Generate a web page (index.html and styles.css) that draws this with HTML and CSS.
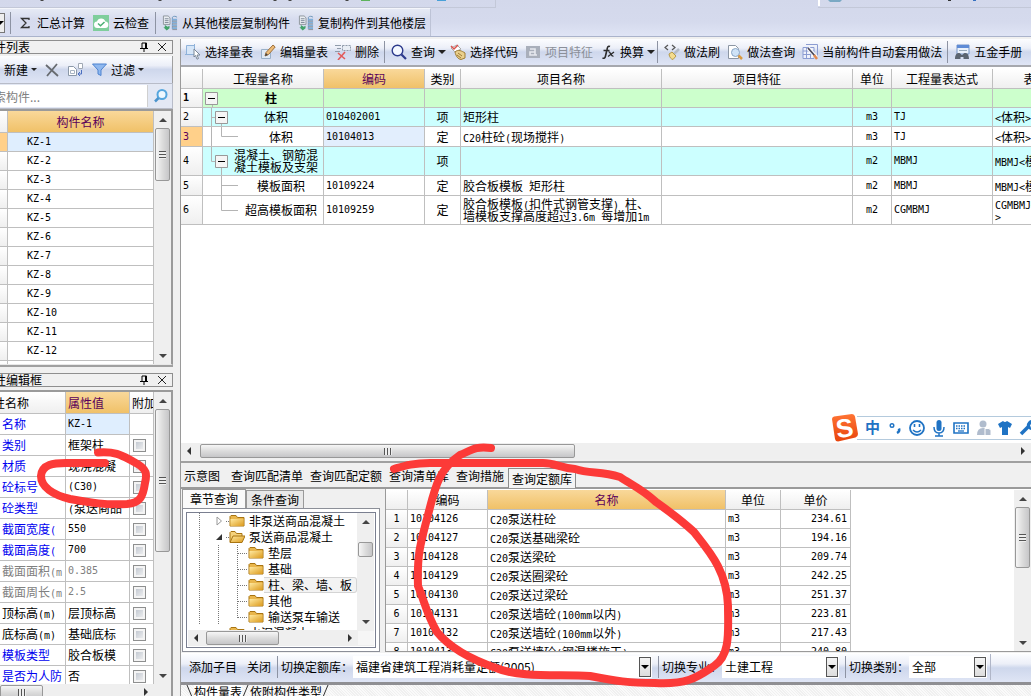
FILE: index.html
```html
<!DOCTYPE html>
<html lang="zh-CN">
<head>
<meta charset="utf-8">
<title>构件做法</title>
<link rel="stylesheet" href="styles.css">
</head>
<body>
<svg class="defs" aria-hidden="true">
  <linearGradient id="gold" x1="0" y1="0" x2="1" y2="1"><stop offset="0" stop-color="#ffe9a0"/><stop offset="1" stop-color="#dc9a1c"/></linearGradient>
  <linearGradient id="orange" x1="0" y1="0" x2="0" y2="1"><stop offset="0" stop-color="#ff7434"/><stop offset="1" stop-color="#e8440c"/></linearGradient>
  <symbol id="folder" viewBox="0 0 16 14"><path d="M1 2.500V12h14V3.500H8.500L7 1.500H2z" fill="#e9b64c" stroke="#a87412"/><path d="M1.500 5h13v7h-13z" fill="url(#gold)"/></symbol>
  <symbol id="folder-open" viewBox="0 0 16 14"><path d="M1 12V2.500L2 1.500h4l1.500 2H13V6" fill="#f5d27c" stroke="#a87412"/><path d="M1 12.500L4 6h12l-3 6.500z" fill="url(#gold)" stroke="#a87412"/></symbol>
  <symbol id="pin" viewBox="0 0 10 10"><path d="M3 1h4.500v5M3 1v5M1 6.500h8M5 6.500V10" fill="none" stroke="#000"/><path d="M6 1h1.500v5H6z"/></symbol>
  <symbol id="cross" viewBox="0 0 10 10"><path d="M1 1l8 8M9 1L1 9" stroke="#222" fill="none"/></symbol>
  <symbol id="copy-down" viewBox="0 0 17 16"><path d="M1.500.5h5l2 2v7h-7z" fill="#e9edf2" stroke="#8d949c"/><path d="M3 3.500h4M3 5.500h4M3 7.500h4" stroke="#7d8896"/><path d="M3 10v2.500H1.500L5 16l3-2.500V11l-2 1z" fill="#43a36a"/><path d="M11 2c1-1.500 4-1.500 5 0M11 2v12.500" fill="none" stroke="#6a93b8"/><path d="M11 4.500h5M11 7.500h5M11 10.500h5M11 13.500h5" stroke="#7fb0dc" stroke-width="2"/><path d="M11 6h5M11 9h5M11 12h5M11 15h5" stroke="#8a8f98" stroke-width="1"/></symbol>
</svg>

<div class="app">
  <header class="top">
    <div class="strip">
      <div class="strip-a">
        <svg width="495" height="7" aria-hidden="true"><path d="M42 0v1M160 0v1M230 0v1M275 0v1M290 0v1M347 0v1" stroke="#444" stroke-width="3"/><path d="M361 0h9v1h-9z" fill="#5db35c"/><path d="M437 0h9v1h-9z" fill="#48a0d8"/></svg>
      </div>
      <div class="strip-b"><svg width="213" height="7" aria-hidden="true"><path d="M1 0v6" stroke="#fff" stroke-width="2"/><path d="M10 0h14l-2 2H12z" fill="#7aa9c4"/><path d="M130 0h3v1h-3z" fill="#333"/><path d="M155 0h3v1h-3z" fill="#3570c0"/></svg></div>
    </div>
    <div class="bar bar-top">
      <span class="combo-end"></span>
      <i class="sep"></i>
      <button class="tool"><svg width="16" height="16" viewBox="0 0 16 16"><path d="M12 5V3.500H4.500L9 8l-4.500 4.500H12V11" fill="none" stroke="#333" stroke-width="1.300"/></svg>汇总计算</button>
      <button class="tool"><svg width="16" height="16" viewBox="0 0 16 16"><path d="M0 0h16v16H0z" fill="#7fce9c"/><path d="M4.500 13a3.200 3.200 0 0 1-.5-6.400 4.300 4.300 0 0 1 8.300 0A3.200 3.200 0 0 1 12 13z" fill="#fff"/><path d="M5 8.500l2.500 2.200L11.500 7" fill="none" stroke="#4caf75" stroke-width="1.500"/></svg>云检查</button>
      <i class="sep"></i>
      <button class="tool"><svg width="16" height="16"><use href="#copy-down"/></svg>从其他楼层复制构件</button>
      <button class="tool"><svg width="16" height="16"><use href="#copy-down"/></svg>复制构件到其他楼层</button>
    </div>
  </header>

  <div class="work">
    <aside class="side">
      <section class="panel panel-list">
        <h2 class="cap"><span>构件列表</span><svg width="10" height="10"><use href="#pin"/></svg><svg width="10" height="10"><use href="#cross"/></svg></h2>
        <div class="bar bar-side">
          <button class="tool drop">新建<i class="tri"></i></button>
          <button class="tool" aria-label="删除构件"><svg width="14" height="14" viewBox="0 0 14 14"><path d="M1 2l12 11M12 1L2 13" stroke="#676b70" stroke-width="1.800" fill="none"/></svg></button>
          <button class="tool" aria-label="复制构件"><svg width="17" height="14" viewBox="0 0 17 14"><path d="M1.500 3.500h5l3 3v6h-8z" fill="#fff" stroke="#8b98a8"/><path d="M3.500 7.500h4v3h-4z" fill="none" stroke="#a7b3c2"/><path d="M11.500.5h4v5h-4z" fill="#fff" stroke="#a0a8b4"/><path d="M14.500 7v4H11m2-2l-2 2 2 2" fill="none" stroke="#4b6fc0"/></svg></button>
          <button class="tool drop"><svg width="15" height="14" viewBox="0 0 15 14"><path d="M.5 1h14L9 7v5.500L6 11V7z" fill="#8fb8ef" stroke="#4c82cf"/></svg>过滤<i class="tri"></i></button>
        </div>
        <div class="search">
          <input type="text" aria-label="搜索构件" placeholder="搜索构件...">
          <button aria-label="搜索"><svg width="14" height="14" viewBox="0 0 14 14"><circle cx="8" cy="5.500" r="4.500" fill="#eef8ff" stroke="#55a6de" stroke-width="2"/><path d="M4.500 9L1 12.500" stroke="#4a93cc" stroke-width="2.500"/></svg></button>
        </div>
        <div class="scrolled">
          <div class="clip">
            <table class="grid names">
              <colgroup><col class="c-no"><col></colgroup>
              <tr><th></th><th class="hot">构件名称</th></tr>
              <tr class="on"><th></th><td>KZ-1</td></tr>
              <tr><th></th><td>KZ-2</td></tr>
              <tr><th></th><td>KZ-3</td></tr>
              <tr><th></th><td>KZ-4</td></tr>
              <tr><th></th><td>KZ-5</td></tr>
              <tr><th></th><td>KZ-6</td></tr>
              <tr><th></th><td>KZ-7</td></tr>
              <tr><th></th><td>KZ-8</td></tr>
              <tr><th></th><td>KZ-9</td></tr>
              <tr><th></th><td>KZ-10</td></tr>
              <tr><th></th><td>KZ-11</td></tr>
              <tr><th></th><td>KZ-12</td></tr>
              <tr><th></th><td></td></tr>
            </table>
          </div>
          <div class="vs"><i class="ar up"></i><i class="thumb t-list"></i><i class="ar down"></i></div>
        </div>
      </section>

      <section class="panel panel-prop">
        <h2 class="cap"><span>属性编辑框</span><svg width="10" height="10"><use href="#pin"/></svg><svg width="10" height="10"><use href="#cross"/></svg></h2>
        <div class="scrolled">
          <div class="clip">
            <table class="grid props">
              <colgroup><col class="c-key"><col class="c-val"><col></colgroup>
              <tr><th>属性名称</th><th class="hot">属性值</th><th>附加</th></tr>
              <tr class="on blue"><td>名称</td><td class="m">KZ-1</td><td></td></tr>
              <tr class="blue"><td>类别</td><td>框架柱</td><td><input type="checkbox" aria-label="附加 类别"></td></tr>
              <tr class="blue"><td>材质</td><td>现浇混凝</td><td><input type="checkbox" aria-label="附加 材质"></td></tr>
              <tr class="blue"><td>砼标号</td><td class="m">(C30)</td><td><input type="checkbox" aria-label="附加 砼标号"></td></tr>
              <tr class="blue"><td>砼类型</td><td><span class="m">(</span>泵送商品</td><td><input type="checkbox" aria-label="附加 砼类型"></td></tr>
              <tr class="blue"><td>截面宽度<span class="m">(</span></td><td class="m">550</td><td><input type="checkbox" aria-label="附加 截面宽度"></td></tr>
              <tr class="blue"><td>截面高度<span class="m">(</span></td><td class="m">700</td><td><input type="checkbox" aria-label="附加 截面高度"></td></tr>
              <tr class="gray"><td>截面面积<span class="m">(m</span></td><td class="m">0.385</td><td><input type="checkbox" aria-label="附加 截面面积"></td></tr>
              <tr class="gray"><td>截面周长<span class="m">(m</span></td><td class="m">2.5</td><td><input type="checkbox" aria-label="附加 截面周长"></td></tr>
              <tr><td>顶标高<span class="m">(m)</span></td><td>层顶标高</td><td><input type="checkbox" aria-label="附加 顶标高"></td></tr>
              <tr><td>底标高<span class="m">(m)</span></td><td>基础底标</td><td><input type="checkbox" aria-label="附加 底标高"></td></tr>
              <tr class="blue"><td>模板类型</td><td>胶合板模</td><td><input type="checkbox" aria-label="附加 模板类型"></td></tr>
              <tr class="blue"><td>是否为人防</td><td>否</td><td><input type="checkbox" aria-label="附加 是否为人防"></td></tr>
            </table>
          </div>
          <div class="vs"><i class="ar up"></i><i class="thumb t-prop"></i><i class="ar down"></i></div>
        </div>
        <div class="hs hs-side"><i class="thumb t-side"></i><i class="ar right"></i></div>
      </section>
    </aside>

    <main class="main">
      <div class="bar bar-main">
        <button class="tool"><svg width="16" height="16" viewBox="0 0 16 16"><path d="M1.500 1.500h8v9h-8z" fill="#d6e6f8" stroke="#8fb2da"/><path d="M0 10.500h4M9.500 0v3" stroke="#8fb2da"/><path d="M9 5l6 6h-3l1.500 3.500-1.500.7-1.500-3.700L9 13z" fill="#fff" stroke="#7a8796"/></svg>选择量表</button>
        <button class="tool"><svg width="16" height="16" viewBox="0 0 16 16"><path d="M1.500 5.500h9v9h-9z" fill="#dfe9f5" stroke="#9ab0c8"/><path d="M5 12l1-3.500L13 1l2.200 2L8.500 10.500z" fill="#eebc78" stroke="#9c6f3c"/><path d="M5 12l1-3 2 2z" fill="#444"/></svg>编辑量表</button>
        <button class="tool"><svg width="16" height="16" viewBox="0 0 16 16"><path d="M0 1.500h6M2 4.500h4M0 7.500h5" stroke="#8f9baa"/><path d="M7.500 1.500h8v5h-8z" fill="#e8edf4" stroke="#8f9baa" stroke-dasharray="2 1"/><path d="M3 9l7 6M10 8l-7 8" stroke="#e25a5a" stroke-width="1.600"/></svg>删除</button>
        <i class="sep"></i>
        <button class="tool drop"><svg width="16" height="16" viewBox="0 0 16 16"><circle cx="6.500" cy="6.500" r="5.300" fill="#f4f8ff" stroke="#2c3a8c" stroke-width="1.400"/><path d="M10.500 10.500L15 15" stroke="#2c3a8c" stroke-width="2.200"/></svg>查询<i class="tri"></i></button>
        <button class="tool"><svg width="16" height="16" viewBox="0 0 16 16"><path d="M1 4l6-3 4 4-6 3z" fill="#fff" stroke="#a9a9a9"/><path d="M1 2l3 3 4-4" fill="none" stroke="#d9534f" stroke-width="1.500"/><path d="M5 8c3-3 7-1 10 1v5l-4 1.500c-3-.5-5-3-6-7.500z" fill="#e9cf8c" stroke="#9f7c34"/><path d="M8 9l4 3M7 11l4 3" stroke="#9f7c34"/></svg>选择代码</button>
        <button class="tool off" disabled><svg width="16" height="16" viewBox="0 0 16 16"><path d="M1 2h14v12H1z" fill="#a9afbb"/><path d="M5 5h5v6H5V8h5M10 11h2" stroke="#e6e9ef" fill="none" stroke-width="1.600"/></svg>项目特征</button>
        <button class="tool drop"><svg width="16" height="16" viewBox="0 0 16 16"><path d="M10 2.500c-2-1-2.500.5-3 3L5.500 12c-.5 2.500-1.500 2.500-3 2M3.500 6.500h6" fill="none" stroke="#2b2b2b" stroke-width="1.600"/><path d="M8.500 8c2-1 2.500 5 5 4M14 8l-6 4.500" fill="none" stroke="#2b2b2b" stroke-width="1.300"/></svg>换算<i class="tri"></i></button>
        <i class="sep"></i>
        <button class="tool"><svg width="16" height="16" viewBox="0 0 16 16"><path d="M4 1L1 3.500 4 6M8 1l3 2.500L8 6" fill="none" stroke="#555" stroke-width="1.200"/><path d="M15 5l-5 5" stroke="#b5bcc6" stroke-width="2.500"/><path d="M5 10l3-2 4 4-3 3.500c-2-.5-3.500-2-4-5.500z" fill="#f4dc8e" stroke="#b69a4a"/></svg>做法刷</button>
        <button class="tool"><svg width="16" height="16" viewBox="0 0 16 16"><path d="M1.500 1.500h7l3 3v10h-10z" fill="#fff" stroke="#8c96a4"/><circle cx="8.500" cy="8.500" r="4" fill="#cfe3f7" stroke="#8aa6c6"/><path d="M11.500 11.500L15 15" stroke="#d89a43" stroke-width="2.500"/></svg>做法查询</button>
        <button class="tool"><svg width="16" height="16" viewBox="0 0 16 16"><path d="M1 3.500h11v11H1z" fill="#eef1fb"/><path d="M1 3.500h11v11H1zM1 7h11M1 10.500h11M4.500 3v12M8.500 3v12M4 .5h11.500v11" fill="none" stroke="#8b9cd2"/><path d="M6 4l8 9" stroke="#fff" stroke-width="4"/><path d="M6 4l7 8" stroke="#4a4a5c" stroke-width="1.800"/><path d="M12 11l3 4" stroke="#e0884e" stroke-width="2.500"/></svg>当前构件自动套用做法</button>
        <i class="sep"></i>
        <button class="tool"><svg width="16" height="16" viewBox="0 0 16 16"><path d="M3 1h12v9H3z" fill="#eaf1fb" stroke="#7795c6"/><path d="M3 1h12v3H3z" fill="#5e8bd6"/><path d="M5 6.500h8" stroke="#9ab"/><path d="M1 15c0-3 1-6 3.500-6S7 11 8 11s1-2 3.500-2S15 12 15 15H9.500v-2h-3v2z" fill="#5b6470"/></svg>五金手册</button>
      </div>

      <div class="sheet">
        <table class="grid bill">
          <colgroup><col class="w-no"><col class="w-name"><col class="w-code"><col class="w-kind"><col class="w-item"><col class="w-feat"><col class="w-unit"><col class="w-expr"><col class="w-desc"></colgroup>
          <tr><th></th><th>工程量名称</th><th class="hot">编码</th><th>类别</th><th>项目名称</th><th>项目特征</th><th>单位</th><th>工程量表达式</th><th>表达式说明</th></tr>
          <tr class="green"><th>1</th><td class="tree"><div><svg width="16" height="18"><path d="M9.500 15v3" stroke="#b4b4b4"/><path d="M2.500 3.500h12v12h-12z" fill="#f5f5f5" stroke="#999"/><path d="M5 9.500h7" stroke="#000"/></svg><b>柱</b></div></td><td></td><td></td><td></td><td></td><td></td><td></td><td></td></tr>
          <tr class="cyan"><th>2</th><td class="tree"><div><svg width="26" height="18"><path d="M8.500 0v18M8.500 9.500h4M18.500 15v3" stroke="#b4b4b4"/><path d="M12.500 3.500h12v12h-12z" fill="#f5f5f5" stroke="#999"/><path d="M15 9.500h7" stroke="#000"/></svg><span>体积</span></div></td><td class="m">010402001</td><td class="mid">项</td><td>矩形柱</td><td></td><td class="m mid">m3</td><td class="m">TJ</td><td><span class="m">&lt;</span>体积<span class="m">&gt;</span></td></tr>
          <tr class="cur"><th>3</th><td class="tree"><div><svg width="36" height="19"><path d="M8.500 0v19M18.500 0v9.500H35" fill="none" stroke="#b4b4b4"/></svg><span>体积</span></div></td><td class="m sel">10104013</td><td class="mid">定</td><td><span class="m">C20</span>柱砼<span class="m">(</span>现场搅拌<span class="m">)</span></td><td></td><td class="m mid">m3</td><td class="m">TJ</td><td><span class="m">&lt;</span>体积<span class="m">&gt;</span></td></tr>
          <tr class="cyan"><th>4</th><td class="tree"><div><svg width="26" height="28"><path d="M8.500 0v14.500h4M18.500 20v8" fill="none" stroke="#b4b4b4"/><path d="M12.500 8.500h12v12h-12z" fill="#f5f5f5" stroke="#999"/><path d="M15 14.500h7" stroke="#000"/></svg><span>混凝土、钢筋混<br>凝土模板及支架</span></div></td><td></td><td class="mid">项</td><td></td><td></td><td class="m mid">m2</td><td class="m">MBMJ</td><td><span class="m">MBMJ&lt;</span>模板面积<span class="m">&gt;</span></td></tr>
          <tr><th>5</th><td class="tree"><div><svg width="36" height="19"><path d="M18.500 0v19M18.500 9.500H35" fill="none" stroke="#b4b4b4"/></svg><span>模板面积</span></div></td><td class="m">10109224</td><td class="mid">定</td><td>胶合板模板<span class="m"> </span>矩形柱</td><td></td><td class="m mid">m2</td><td class="m">MBMJ</td><td><span class="m">MBMJ&lt;</span>模板面积<span class="m">&gt;</span></td></tr>
          <tr><th>6</th><td class="tree"><div><svg width="36" height="28"><path d="M18.500 0v14.500H35" fill="none" stroke="#b4b4b4"/></svg><span>超高模板面积</span></div></td><td class="m">10109259</td><td class="mid">定</td><td>胶合板模板<span class="m">(</span>扣件式钢管支撑<span class="m">) </span>柱、<br>墙模板支撑高度超过<span class="m">3.6m </span>每增加<span class="m">1m</span></td><td></td><td class="m mid">m2</td><td class="m">CGMBMJ</td><td><span class="m">CGMBMJ&lt;</span>超高模板面积<br><span class="m">&gt;</span></td></tr>
        </table>
        <div class="ime">
          <svg width="204" height="28" viewBox="0 0 204 28">
            <path d="M28 2h176v23H28z" fill="#fff"/><path d="M28 2.500h176M28 25.500h176" stroke="#b4cadd"/>
            <path d="M3 5Q3 3 5 2.500L23 0q2.500 0 3 2.500L29 20q0 2.500-2.500 3.500L9 27.500Q6.500 27.500 6 25z" fill="url(#orange)"/>
            <text x="7" y="23" transform="rotate(-8 16 14)" class="ime-s">S</text>
            <text x="36" y="19" class="ime-zh">中</text>
            <g fill="none" stroke="#1f73c4" stroke-width="2">
              <circle cx="63" cy="11.500" r="1.800" stroke-width="1.400"/><path d="M70 14.500q1 3-2 4.500" stroke-width="2.500"/>
              <circle cx="88" cy="14" r="7" stroke-width="1.800"/><path d="M84 16q4 4 8 0" stroke-width="1.400"/><path d="M85.500 10v3M90.500 10v3" stroke-width="1.600"/>
              <path d="M105 13q0 6 5 6t5-6M110 19v3M106 22h8" stroke-width="1.500"/>
              <path d="M125 9h14v10h-14z" stroke-width="1.600"/><path d="M127 12h10M127 14.500h10" stroke-width="1.400" stroke-dasharray="1.500 1"/><path d="M129 17h6" stroke-width="1.300"/>
            </g>
            <rect x="107.500" y="6" width="5" height="11" rx="2.500" fill="#1f73c4"/>
            <g fill="#b0bccd"><circle cx="154" cy="10" r="3.500"/><path d="M148 21q0-7 6-7 4 0 5 3v4z"/><path d="M156 14.500h4l2 2v5h-6z" stroke="#fff"/></g>
            <path d="M169 10l5-3q2 2 4 0l5 3-2 4-2-1v8h-6v-8l-2 1z" fill="#1f73c4"/>
            <path d="M192 20l8-8" stroke="#1f73c4" stroke-width="3.500"/><path d="M206 7a5 5 0 1 0 0 8l-4-1-1-3z" fill="#1f73c4"/>
          </svg>
        </div>
      </div>
      <div class="hs hs-main"><i class="ar left"></i><i class="thumb t-main"></i><i class="ar right"></i></div>

      <nav class="tabs">
        <button class="first">示意图</button><button>查询匹配清单</button><button>查询匹配定额</button><button>查询清单库</button><button>查询措施</button><button class="active">查询定额库</button>
      </nav>

      <div class="query">
        <div class="finder">
          <div class="subtabs"><button class="active">章节查询</button><button>条件查询</button></div>
          <div class="frame">
            <div class="treebox">
              <div class="scrolled">
                <ul class="nodes">
                  <li><svg width="41" height="16"><path d="M11.500 0v16M38 8.500h3" stroke="#777" stroke-dasharray="1 1"/><path d="M29 4l4.500 4-4.500 4z" fill="#fff" stroke="#999"/></svg><svg width="16" height="14"><use href="#folder"/></svg><span>非泵送商品混凝土</span></li>
                  <li><svg width="41" height="16"><path d="M11.500 0v16M38 8.500h3" stroke="#777" stroke-dasharray="1 1"/><path d="M28 11h6V5z" fill="#333"/></svg><svg width="16" height="14"><use href="#folder-open"/></svg><span>泵送商品混凝土</span></li>
                  <li><svg width="60" height="16"><path d="M11.500 0v16M30.500 0v16M49.500 0v16M50 8.500h9" stroke="#777" stroke-dasharray="1 1"/></svg><svg width="16" height="14"><use href="#folder"/></svg><span>垫层</span></li>
                  <li><svg width="60" height="16"><path d="M11.500 0v16M30.500 0v16M49.500 0v16M50 8.500h9" stroke="#777" stroke-dasharray="1 1"/></svg><svg width="16" height="14"><use href="#folder"/></svg><span>基础</span></li>
                  <li class="picked"><svg width="60" height="16"><path d="M11.500 0v16M30.500 0v16M49.500 0v16M50 8.500h9" stroke="#777" stroke-dasharray="1 1"/></svg><svg width="16" height="14"><use href="#folder"/></svg><span>柱、梁、墙、板</span></li>
                  <li><svg width="60" height="16"><path d="M11.500 0v16M30.500 0v16M49.500 0v16M50 8.500h9" stroke="#777" stroke-dasharray="1 1"/></svg><svg width="16" height="14"><use href="#folder"/></svg><span>其他</span></li>
                  <li><svg width="60" height="16"><path d="M11.500 0v16M30.500 0v16M49.500 0v9M50 8.500h9" stroke="#777" stroke-dasharray="1 1"/></svg><svg width="16" height="14"><use href="#folder"/></svg><span>输送泵车输送</span></li>
                  <li><svg width="41" height="16"></svg><svg width="16" height="14"><use href="#folder"/></svg><span>水泥混凝土</span></li>
                </ul>
                <div class="vs"><i class="ar up"></i><i class="thumb t-tree"></i><i class="ar down"></i></div>
              </div>
              <div class="hs hs-tree"><i class="ar left"></i><i class="thumb t-treeh"></i><i class="ar right"></i><i class="corner"></i></div>
            </div>
          </div>
        </div>
        <div class="results">
          <div class="clip">
            <table class="grid quota">
              <colgroup><col class="q-no"><col class="q-code"><col class="q-name"><col class="q-unit"><col class="q-price"></colgroup>
              <tr><th></th><th>编码</th><th class="hot">名称</th><th>单位</th><th>单价</th></tr>
              <tr><th class="m">1</th><td class="m">10104126</td><td><span class="m">C20</span>泵送柱砼</td><td class="m">m3</td><td class="m num">234.61</td></tr>
              <tr><th class="m">2</th><td class="m">10104127</td><td><span class="m">C20</span>泵送基础梁砼</td><td class="m">m3</td><td class="m num">194.16</td></tr>
              <tr><th class="m">3</th><td class="m">10104128</td><td><span class="m">C20</span>泵送梁砼</td><td class="m">m3</td><td class="m num">209.74</td></tr>
              <tr><th class="m">4</th><td class="m">10104129</td><td><span class="m">C20</span>泵送圈梁砼</td><td class="m">m3</td><td class="m num">242.25</td></tr>
              <tr><th class="m">5</th><td class="m">10104130</td><td><span class="m">C20</span>泵送过梁砼</td><td class="m">m3</td><td class="m num">251.37</td></tr>
              <tr><th class="m">6</th><td class="m">10104131</td><td><span class="m">C20</span>泵送墙砼<span class="m">(100mm</span>以内<span class="m">)</span></td><td class="m">m3</td><td class="m num">223.81</td></tr>
              <tr><th class="m">7</th><td class="m">10104132</td><td><span class="m">C20</span>泵送墙砼<span class="m">(100mm</span>以外<span class="m">)</span></td><td class="m">m3</td><td class="m num">217.43</td></tr>
              <tr><th class="m">8</th><td class="m">10104133</td><td><span class="m">C20</span>泵送墙砼<span class="m">(</span>钢混楼施工<span class="m">)</span></td><td class="m">m3</td><td class="m num">240.80</td></tr>
            </table>
          </div>
          <div class="vs"><i class="ar up"></i><i class="thumb t-quota"></i><i class="ar down"></i></div>
        </div>
      </div>

      <div class="bar bar-foot">
        <div class="foot-set">
          <button>添加子目</button><button>关闭</button>
          <i class="sep"></i>
          <label for="lib">切换定额库：</label>
          <span class="pick p-lib"><select id="lib"><option>福建省建筑工程消耗量定额(2005)</option></select><i class="pick-btn"></i></span>
          <i class="sep"></i>
          <label for="major">切换专业：</label>
          <span class="pick p-major"><select id="major"><option>土建工程</option></select><i class="pick-btn"></i></span>
          <i class="sep"></i>
          <label for="kind">切换类别：</label>
          <span class="pick p-kind"><select id="kind"><option>全部</option></select><i class="pick-btn"></i></span>
        </div>
      </div>
      <nav class="sheets">
        <svg width="8" height="12"><path d="M1 0l5 12" stroke="#333"/></svg><button class="active">构件量表</button><svg width="8" height="12"><path d="M6 0L1 12" stroke="#333"/></svg><button>依附构件类型</button><svg width="8" height="12"><path d="M6 0L1 12" stroke="#333"/></svg>
      </nav>
    </main>
  </div>
  <svg class="ink" width="1031" height="696" viewBox="0 0 1031 696" aria-hidden="true">
    <path d="M98 452.500C118 451 124 457 134 462C148 469 147 475 145 483C143 497 140 503 127 504C105 505 92 503 70 499C53 495 41 487 41 476C42 464 54 463 66 463H105"/>
    <path d="M491 448C475 446 472 450 460 455C438 470 435 488 428 515C420 545 417 555 418 586C424 600 427 615 437 632C450 648 470 659 496 668C520 678 560 674 590 676C615 681 630 683 655 683C690 685 700 675 714 666C731 655 728 630 728 606C727 570 708 550 694 532C680 519 670 512 656 502C642 489 630 484 620 477C600 471 590 474 575 469C560 468 555 463 543 463H430C412 463 404 466 394 469"/>
  </svg>
</div>
</body>
</html>
```
FILE: styles.css
```css
* { box-sizing: border-box; }
body {
  margin: 0;
  font: 12px/14px "Noto Sans CJK SC", "Noto Sans", sans-serif;
  color: #000;
  background: #f0f0f0;
}
.defs { position: absolute; width: 0; height: 0; }
svg { flex: none; display: block; }
button, input, select { font: inherit; color: inherit; margin: 0; }
button { border: 0; padding: 0; background: none; white-space: nowrap; }
h2 { margin: 0; font-size: 12px; font-weight: normal; }
.m { font-family: "DejaVu Sans Mono", monospace; font-size: 10px; white-space: pre; }
span.m { line-height: 0; }

.app { position: relative; display: flex; flex-direction: column; height: 100vh; overflow: hidden; }
.ink { position: absolute; left: 0; top: 0; pointer-events: none; }
.ink path { fill: none; stroke: #fc3a38; stroke-width: 8; stroke-linecap: round; stroke-linejoin: round; }

/* toolbars */
.top { background: linear-gradient(#d3d8eb, #d5daed 60%, #dfe4f5); border-bottom: 1px solid #aab3cb; }
.strip { display: flex; justify-content: space-between; height: 8px; }
.strip-a { width: 496px; border: solid #c3c8d8; border-width: 0 1px 1px 0; }
.strip-b { width: 213px; border-bottom: 1px solid #c3c8d8; overflow: hidden; }
.bar { display: flex; align-items: center; background: linear-gradient(#fcfdff, #eceff8 35%, #ced7ec 50%, #dfe5f5); }
.bar-top { width: 431px; height: 28px; background: linear-gradient(#e6eaf5, #d6dbee 40%, #d8ddf0); border-top: 1px solid #f4f6fb; border-right: 1px solid #bdc3d6; }
.combo-end { display: flex; align-items: center; justify-content: flex-end; width: 7px; height: 20px; margin-right: 3px; border: 1px solid #777; border-left: 0; background: #eee; overflow: hidden; }
.combo-end::after { content: ""; border: 4px solid transparent; border-top-color: #000; border-bottom: 0; }
.sep { flex: none; width: 1px; height: 22px; margin: 0 2px; background: #8d93a3; }
.tool { display: flex; align-items: center; gap: 4px; height: 22px; padding: 0 4px; }
.tri { border: 4px solid transparent; border-top-color: #222; border-bottom: 0; margin-left: -1px; }
.tool.off { color: #8b8f98; }
.bar-main { height: 28px; border-bottom: 2px solid #a6a8ae; white-space: nowrap; overflow: hidden; }
.bar-main .tool { padding-right: 3px; }
.bar-main .drop { padding-right: 0; }

.work { flex: 1; display: flex; min-height: 0; padding-top: 2px; }

/* left docks; the dock is partly scrolled past the window edge */
.side { flex: none; width: 197px; margin-left: -24px; padding-top: 1px; display: flex; flex-direction: column; gap: 6px; }
.panel { display: flex; flex-direction: column; min-height: 0; }
.panel-list { flex: 0 0 327px; border-bottom: 2px solid #a0a0a0; }
.panel-prop { flex: 1; }
.cap { display: flex; align-items: center; gap: 8px; height: 14px; padding: 0 5px; border: 1px solid #8e8e8e; background: #f0f0f0; line-height: 12px; }
.cap span { flex: 1; }
.bar-side { height: 27px; margin-top: 2px; padding-left: 24px; border-right: 1px solid #a0a0a0; }
.bar-side .tri { border-width: 3px 3px 0; }
.search { display: flex; align-items: center; height: 26px; background: #e3e8f4; border: 1px solid #b8bcc8; }
.search input { flex: 1; min-width: 0; height: 22px; border: 0; border-right: 1px solid #d0d0d0; padding: 0 5px; background: #fff; }
.search input::placeholder { color: #808080; opacity: 1; }
.search button { padding: 0 4px 0 6px; }
.scrolled { flex: 1; display: flex; min-height: 0; overflow: hidden; }
.panel .scrolled { background: #fff; border: solid #9a9a9a; border-width: 2px 2px 0 0; }
.panel-prop .scrolled { margin-top: 3px; }
.panel-list .scrolled { border-bottom: 1px solid #e8e8e8; }
.clip { flex: 1; min-width: 0; overflow: hidden; }

/* grids */
.grid { table-layout: fixed; border-collapse: separate; border-spacing: 0; line-height: 12px; background: #fff; }
.grid th, .grid td { padding: 0 2px; border: solid #bfbfbf; border-width: 0 1px 1px 0; font-weight: normal; white-space: nowrap; overflow: hidden; text-align: left; vertical-align: middle; }
.grid th { text-align: center; background: linear-gradient(#fff, #efefef); }
.grid .hot { color: #5a005a; background: linear-gradient(#f9d89a, #f0c168); }
.grid .mid { text-align: center; }
.names { width: 100%; }
.c-no { width: 32px; }
.names tr { height: 19px; }
.names tr:first-child { height: 22px; }
.names td { padding-left: 19px; font-family: "DejaVu Sans Mono", monospace; font-size: 10px; }
.names .on th { background: #ffd08a; }
.on td:nth-child(2) { background: #dfeefe; }
.props { width: 100%; }
.c-key { width: 90px; }
.c-val { width: 64px; }
.props tr { height: 21px; }
.props tr:first-child { height: 22px; }
.props td:first-child { padding: 0 0 0 26px; }
.props th { text-align: left; }
.props th:first-child { padding-left: 5px; }
.blue td:first-child { color: #0000f0; }
.gray td:nth-child(-n+2) { color: #808080; }
input[type="checkbox"] { appearance: none; display: block; width: 13px; height: 13px; margin-left: 1px; border: 1px solid #8e8f8f; background: linear-gradient(135deg, #b9c0ca, #f6f6f6); box-shadow: inset 0 0 0 2px #f4f4f4; }

.main { flex: 1; min-width: 0; margin-left: 7px; border-left: 1px solid #9a9a9a; display: flex; flex-direction: column; }
.sheet { position: relative; flex: 1; min-height: 0; overflow: hidden; background: #fff; padding-top: 2px; }
.bill { width: 934px; }
.w-no { width: 22px; } .w-name { width: 121px; } .w-code { width: 101px; } .w-kind { width: 36px; }
.w-item { width: 201px; } .w-feat { width: 191px; } .w-unit { width: 39px; } .w-expr { width: 101px; }
.bill tr:first-child { height: 20px; }
.bill tr:nth-child(n+2) th { text-align: left; font-family: "DejaVu Sans Mono", monospace; font-size: 10px; }
.bill .tree { padding: 0; }
.tree div { display: flex; align-items: center; }
.tree span, .tree b { flex: 1; text-align: center; }
.green td { background: #cfc; }
.bill .green th { font-weight: bold; }
.cyan td { background: #cff; }
.bill .cur th { background: #ffd08a; color: #5a005a; }
.grid .sel { background: #e2eefd; }
.ime { position: absolute; right: 0; bottom: 1px; width: 202px; height: 28px; overflow: hidden; }
.ime-s { font: bold 26px "Liberation Sans", sans-serif; fill: #fff; }
.ime-zh { font-size: 15px; font-weight: bold; fill: #1f73c4; }

/* scroll bars */
.vs, .hs { flex: none; display: flex; background: #efefef; }
.vs { flex-direction: column; width: 17px; padding: 0 1px; }
.hs { height: 16px; padding: 1px 0; }
.ar { flex: none; width: 16px; height: 17px; display: flex; align-items: center; justify-content: center; }
.ar::after { content: ""; border: 4px solid transparent; }
.up::after { border-bottom-color: #444; border-top: 0; }
.down::after { border-top-color: #444; border-bottom: 0; }
.left::after { border-right-color: #333; border-left: 0; }
.right::after { border-left-color: #333; border-right: 0; }
.hs .ar { height: 14px; }
.down { margin-top: auto; }
.right { margin-left: auto; }
.thumb { flex: none; border: 1px solid #989898; border-radius: 2px; display: flex; align-items: center; justify-content: center; }
.vs .thumb { background: linear-gradient(90deg, #f6f6f6, #dcdcdc 50%, #c6c6c8); }
.hs .thumb { background: linear-gradient(#f6f6f6, #dcdcdc 50%, #c6c6c8); }
.vs .thumb::after { content: ""; width: 7px; height: 8px; background: repeating-linear-gradient(#555 0 1px, #eee 1px 3px); }
.hs .thumb::after { content: ""; width: 8px; height: 7px; background: repeating-linear-gradient(90deg, #555 0 1px, #eee 1px 3px); }
.t-list { height: 53px; }
.t-prop { height: 143px; }
.t-tree { height: 15px; margin-top: 12px; }
.vs .t-tree::after { display: none; }
.t-quota { height: 61px; }
.t-side { width: 43px; margin-left: 24px; }
.hs-side { border-right: 2px solid #9a9a9a; height: 12px; padding-right: 17px; overflow: hidden; }
.hs-side .thumb { height: 15px; }
.t-main { width: 375px; margin-left: 3px; }
.t-treeh { width: 73px; margin-left: 2px; }
.corner { width: 16px; background: #f6f6f6; }

/* query dock */
.tabs { flex: none; display: flex; height: 28px; margin-top: 2px; padding: 3px 0 0 3px; gap: 7px; border-top: 2px solid #a0a0a0; border-bottom: 2px solid #9a9a9a; }
.tabs .first { margin-right: 4px; }
.tabs button { height: 20px; }
.tabs .active { margin: 2px 0 0 -3px; padding: 0 3px; border: 1px solid #8c8c8c; border-bottom: 0; background: #f4f4f4; }
.query { flex: none; display: flex; height: 163px; gap: 4px; }
.finder { flex: none; width: 200px; padding: 0 1px; display: flex; flex-direction: column; }
.subtabs { display: flex; align-items: flex-end; height: 19px; }
.subtabs button { height: 18px; padding: 0 4px; border: 1px solid #999; border-bottom: 0; background: #e8e8e8; }
.subtabs .active { height: 19px; padding: 0 7px; background: #fafafa; }
.frame { flex: 1; min-height: 0; padding: 3px; background: #fff; border: 1px solid #8c8f98; }
.treebox { height: 100%; display: flex; flex-direction: column; border: 1px solid #7a7f90; padding: 0 1px 1px; }
.nodes { flex: 1; margin: 0; padding: 0; list-style: none; overflow: hidden; }
.nodes li { display: flex; align-items: center; height: 16px; white-space: nowrap; }
.nodes span { padding: 0 4px; line-height: 14px; }
.picked span { border: 1px solid #d4d4d4; border-left: 0; border-radius: 0 3px 3px 0; background: #f3f3f3; }
.results { flex: 1; min-width: 0; display: flex; background: #fff; border-left: 1px solid #9a9a9a; border-bottom: 1px solid #9a9a9a; padding-top: 1px; }
.quota { width: 465px; }
.q-no { width: 22px; } .q-code { width: 80px; } .q-name { width: 238px; } .q-unit { width: 55px; } .q-price { width: 70px; }
.quota tr { height: 19px; }
.quota tr:first-child { height: 20px; }
.grid .num { text-align: right; padding-right: 3px; }

.bar-foot { flex: none; height: 29px; margin-top: 1px; padding-bottom: 2px; border-top: 1px solid #fff; }
.foot-set { display: flex; align-items: center; height: 100%; padding: 0 3px 0 8px; border-right: 1px solid #b0b6c8; white-space: nowrap; }
.foot-set button + button { margin-left: 10px; }
.foot-set .sep { margin: 0 3px 0 6px; }
.pick { position: relative; display: flex; height: 22px; }
.pick select { appearance: none; width: 100%; border: 0; border-radius: 0; padding: 0 16px 0 3px; background: #fff; }
.pick-btn { position: absolute; right: 1px; top: 1px; width: 12px; height: 20px; border: 1px solid #555; background: linear-gradient(#f4f4f4, #ddd); pointer-events: none; display: flex; align-items: center; justify-content: center; }
.pick-btn::after { content: ""; border: 4px solid transparent; border-top-color: #000; border-bottom: 0; }
.p-lib { width: 299px; }
.p-major { width: 117px; }
.p-kind { width: 78px; }
.sheets { flex: none; display: flex; height: 14px; padding-left: 5px; border-top: 3px solid #8f8f93; background: repeating-linear-gradient(45deg, #fafafa 0 1px, #f0f0f0 1px 2px); overflow: hidden; }
.sheets button { height: 14px; line-height: 14px; }
.sheets .active { background: #fff; }
```
